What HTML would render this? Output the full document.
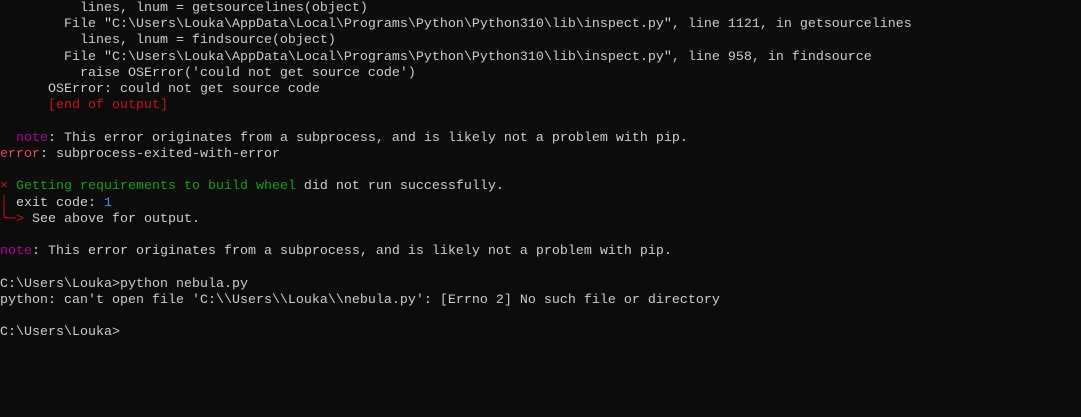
<!DOCTYPE html>
<html><head><style>
html,body{margin:0;padding:0;background:#0c0c0c;width:1081px;height:417px;overflow:hidden}
pre{margin:0;position:absolute;left:0;top:1px;font-family:"Liberation Mono",monospace;font-size:13.33px;line-height:16.22px;color:#cccccc}
.m{color:#b4009e}.r{color:#e74856}.g{color:#13a10e}.c{color:#3a96dd}.d{color:#c50f1f}
</style></head><body>
<pre>          lines, lnum = getsourcelines(object)
        File "C:\Users\Louka\AppData\Local\Programs\Python\Python310\lib\inspect.py", line 1121, in getsourcelines
          lines, lnum = findsource(object)
        File "C:\Users\Louka\AppData\Local\Programs\Python\Python310\lib\inspect.py", line 958, in findsource
          raise OSError('could not get source code')
      OSError: could not get source code
      <span class="d">[end of output]</span>

  <span class="m">note</span>: This error originates from a subprocess, and is likely not a problem with pip.
<span class="r">error</span>: subprocess-exited-with-error

<span class="d">×</span> <span class="g">Getting requirements to build wheel</span> did not run successfully.
<span class="d">│</span> exit code: <span class="c">1</span>
<span class="d">╰─&gt;</span> See above for output.

<span class="m">note</span>: This error originates from a subprocess, and is likely not a problem with pip.

C:\Users\Louka&gt;python nebula.py
python: can't open file 'C:\\Users\\Louka\\nebula.py': [Errno 2] No such file or directory

C:\Users\Louka&gt;</pre>
</body></html>
